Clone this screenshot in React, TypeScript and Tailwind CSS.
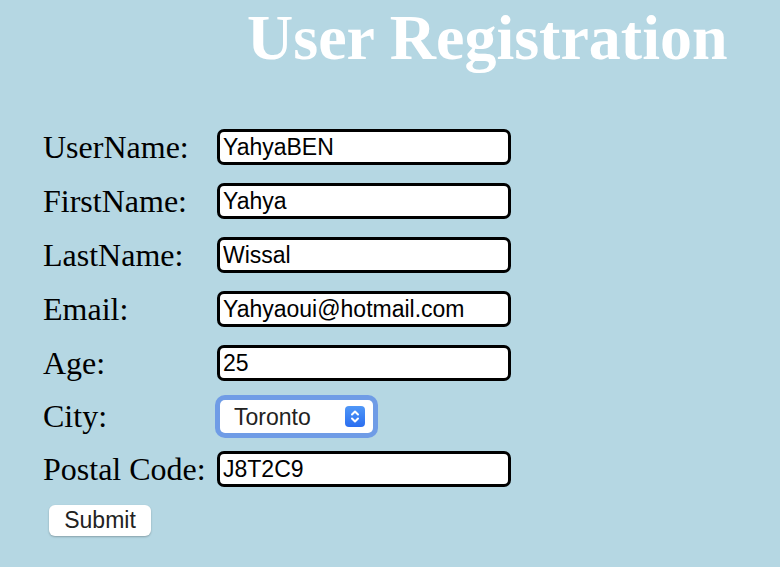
import { useState } from "react";

const fields = [
  { label: "UserName:", value: "YahyaBEN" },
  { label: "FirstName:", value: "Yahya" },
  { label: "LastName:", value: "Wissal" },
  { label: "Email:", value: "Yahyaoui@hotmail.com" },
  { label: "Age:", value: "25" },
];

const labelCls =
  "w-[174px] shrink-0 text-[32px] leading-[32px] text-black font-['Liberation_Serif',serif]";
const inputCls =
  "w-[294px] h-[36px] border-[3px] border-black rounded-[7px] bg-white px-[3px] pt-[1px] text-[23px] text-black font-['Liberation_Sans',Arial,sans-serif] outline-none";

export default function App() {
  const [values, setValues] = useState(fields.map(f => f.value));
  const [city, setCity] = useState("Toronto");
  const [postal, setPostal] = useState("J8T2C9");

  return (
    <div className="min-h-[567px] w-full bg-[#b5d7e3] font-['Liberation_Serif',serif]">
      <h1 className="pt-[6px] pl-[247px] text-[64px] leading-[64px] font-bold text-white whitespace-nowrap">
        User Registration
      </h1>

      <form className="mt-[59px] pl-[43px] flex flex-col gap-[18px]" onSubmit={e => e.preventDefault()}>
        {fields.map((f, i) => (
          <div key={f.label} className="flex items-center h-[36px]">
            <label className={labelCls}>{f.label}</label>
            <input
              className={inputCls}
              value={values[i]}
              onChange={e => {
                const next = [...values];
                next[i] = e.target.value;
                setValues(next);
              }}
            />
          </div>
        ))}

        <div className="flex items-center h-[34px]">
          <label className={labelCls}>City:</label>
          <div className="relative ml-[3px] w-[153px] h-[33px] rounded-[5px] bg-white shadow-[0_0_0_5px_#6f9ce6]">
            <select
              value={city}
              onChange={e => setCity(e.target.value)}
              className="appearance-none w-full h-full bg-transparent pl-[14px] text-[23px] text-[#222] font-['Liberation_Sans',Arial,sans-serif] outline-none"
            >
              <option>Toronto</option>
              <option>Montreal</option>
              <option>Ottawa</option>
              <option>Vancouver</option>
            </select>
            <div className="pointer-events-none absolute right-[8px] top-[6px] w-[20px] h-[21px] rounded-[4px] bg-gradient-to-b from-[#5097f7] to-[#2b6ef0] flex items-center justify-center">
              <svg width="10" height="15" viewBox="0 0 10 15" fill="none" stroke="white" strokeWidth="2" strokeLinecap="round" strokeLinejoin="round">
                <path d="M2 5.5 L5 2.5 L8 5.5" />
                <path d="M2 9.5 L5 12.5 L8 9.5" />
              </svg>
            </div>
          </div>
        </div>

        <div className="flex items-center h-[36px]">
          <label className={labelCls}>Postal Code:</label>
          <input className={inputCls} value={postal} onChange={e => setPostal(e.target.value)} />
        </div>

        <div>
          <button
            type="submit"
            className="ml-[6px] w-[102px] h-[31px] rounded-[6px] bg-white text-[23px] leading-[31px] text-[#222] font-['Liberation_Sans',Arial,sans-serif] shadow-[0_1px_2px_rgba(0,0,0,0.25)]"
          >
            Submit
          </button>
        </div>
      </form>
    </div>
  );
}
